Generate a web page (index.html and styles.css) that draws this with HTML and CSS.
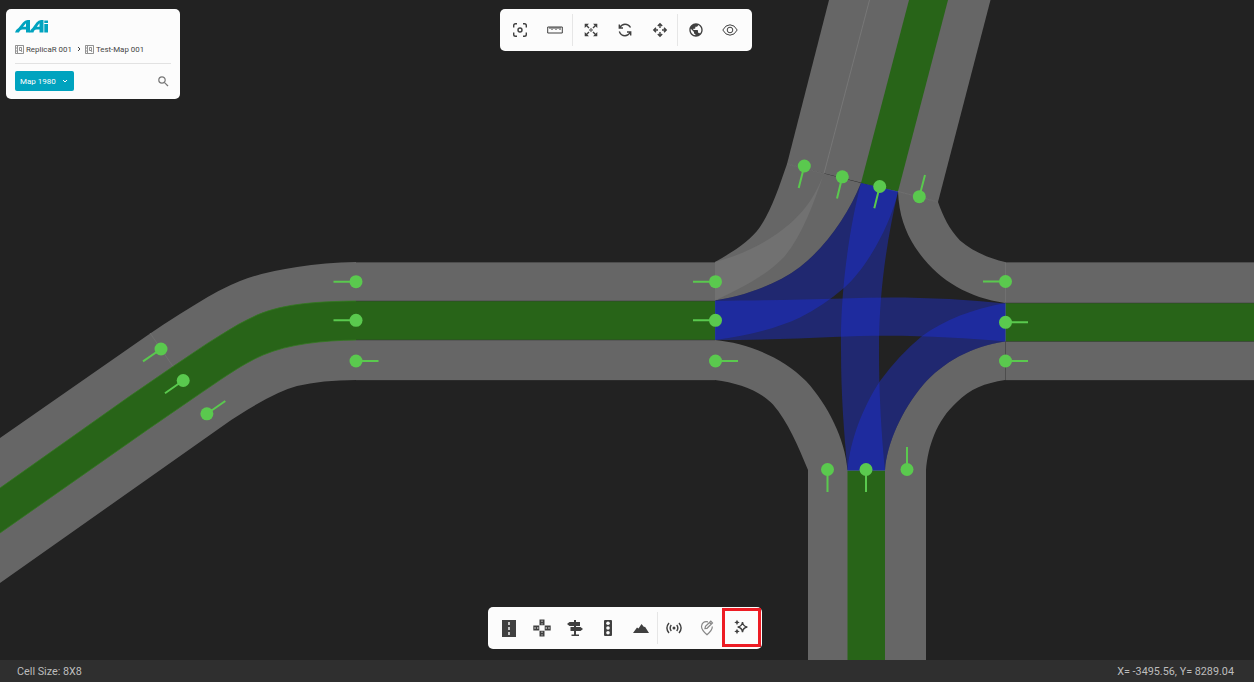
FILE: index.html
```html
<!DOCTYPE html>
<html lang="en">
<head>
  <meta charset="UTF-8" />
  <meta name="viewport" content="width=device-width, initial-scale=1.0" />
  <title>Map Editor</title>
  <link rel="stylesheet" href="styles.css">
</head>
<body>
  <div class="editor">
    <main class="map-area">
      <svg class="map" width="1254" height="660" viewBox="0 0 1254 660">
        <!-- lanes -->
        <g class="lane">
          <path d="M0 438L130 347.500C152 332 174 317 197 303.500Q220 289 240 281Q263 272 297 267Q325 262.500 356 262H715V380H356Q322 380 297 386Q278 391 247 410Q232 419 217 430L0 583Z" />
          <path d="M829 0H990.500L938 202L787 164Z" />
          <path d="M1005 262H1254V380H1005Z" />
          <path d="M808 470H926V660H808Z" />
          <path d="M787 164C779 187 772 209 760 227C750 241 736 250 715 262V300.500C738 297 774 287 800 267C827 246 849 213 861 183Z" />
          <path d="M898 191.500C899 215 905 231 915 247C936 279 966 297 1005 303V262C988 258 972 251 960 240.500C949 229 943 216 938 202Z" />
          <path d="M715 340C746 343 781 356 806 381C828 405 845 439 847.500 470H808C798 446 788 422 773 404.500C759 390 738 383 715 380Z" />
          <path d="M1005 341.500C972 346 943 362 923 385C902 410 887 443 885 470H926C928 447 936 421 957 402C970 389 985 383 1005 380Z" />
        </g>
        <path class="lane-overlap" d="M824 173.500C813 202 799 218 778 233C760 246 738 256 715 262V300.500C740 289 767 275 784 257C802 236 813 205 824 173.500Z" />
        <g class="lane-active">
          <path d="M0 488L130 396L173 366.500C189 356 204 345 220 335.500Q239 323 257 315C285 303 320 301.500 356 301H715.500V340H356C322 340.500 289 344 263 355C240 365 219 381 195 397L147 430L0 533Z" />
          <path d="M909 0H948L898 191.500L861 183Z" />
          <path d="M1005.500 303H1254V341.500H1005.500Z" />
          <path d="M847.500 470.500H885V660H847.500Z" />
        </g>

        <!-- connections inside the junction -->
        <g class="connection">
          <path d="M861 183C849 213 827 246 800 267C774 287 738 297 715 300.500V340C752 335 780 327 800 317.500Q823 306 844 288C867 268 891 224 898 191.500Z" />
          <path d="M861 183C850 225 840 290 841 350C841 395 844 432 847.500 470.500H885C882 439 879 400 879 350C879 290 887 240 898 191.500Z" />
          <path d="M715 301C760 300 800 300 843 298.500C898 296 955 298 1005.500 303.500V341.500C955 337 898 334 833 337C795 339 755 340 715 340Z" />
          <path d="M1005.500 303C972 309 944 320 921.500 336.500Q899 355 880 381C863 407 850 440 847.500 470.500H885C887 443 902 410 923 385C943 362 972 346 1005.500 341.500Z" />
        </g>

        <!-- borders -->
        <path class="lane-line" d="M869.500 0L824 173.500" />
        <g class="edge-light">
          <path d="M787 164L824 173.500M898 191.500L938 202M150 333L173 366.500M1005.500 262V302" />
          <path class="green-line" d="M0 488L130 396L173 366.500C189 356 204 345 220 335.500Q239 323 257 315C285 303 320 301.500 356 301M356 340C322 340.500 289 344 263 355C240 365 219 381 195 397L147 430L0 533" />
        </g>
        <g class="edge-dark">
          <path d="M356 262.500H715M356 301H715M356 340H715M356 380.500H715M1005.500 262.500H1254M1005.500 303H1254M1005.500 341.500H1254M1005.500 380.500H1254M1005.500 341.500V380" />
        </g>

        <!-- nodes -->
        <g class="node">
          <path d="M356 281.700H333.500M356 320.300H333.500M356 361H378.500M715.500 281.700H693M715.500 320.300H693M715.500 361H738M1005.500 281.500H983M1005.500 322.300H1028M1005.500 361H1028M827.500 469.500V492M866 469.500V492M907 469.500V447M161 349L143 361.300M183.200 380.500L165 393.300M206.900 413.800L225.300 401M804.300 166L798.700 188M842.300 176.800L837 198.500M879.700 186.500L874.300 208.300M919.300 196.700L925 175" />
          <circle cx="356" cy="281.700" r="6.500" />
          <circle cx="356" cy="320.300" r="6.500" />
          <circle cx="356" cy="361" r="6.500" />
          <circle cx="715.500" cy="281.700" r="6.500" />
          <circle cx="715.500" cy="320.300" r="6.500" />
          <circle cx="715.500" cy="361" r="6.500" />
          <circle cx="1005.500" cy="281.500" r="6.500" />
          <circle cx="1005.500" cy="322.300" r="6.500" />
          <circle cx="1005.500" cy="361" r="6.500" />
          <circle cx="827.500" cy="469.500" r="6.500" />
          <circle cx="866" cy="469.500" r="6.500" />
          <circle cx="907" cy="469.500" r="6.500" />
          <circle cx="161" cy="349" r="6.500" />
          <circle cx="183.200" cy="380.500" r="6.500" />
          <circle cx="206.900" cy="413.800" r="6.500" />
          <circle cx="804.300" cy="166" r="6.500" />
          <circle cx="842.300" cy="176.800" r="6.500" />
          <circle cx="879.700" cy="186.500" r="6.500" />
          <circle cx="919.300" cy="196.700" r="6.500" />
        </g>
      </svg>

      <section class="panel">
        <svg class="logo" width="34" height="13" viewBox="0 0 34 13">
          <path fill-rule="evenodd" d="M0 12.500Q.5 9.500 3.500 8L8 2.500Q10 0 12.500 0H15V12.500H11V9.500H7.500Q5 9.500 4 12.500ZM8 6.800H11V3.200Z" />
          <path fill-rule="evenodd" d="M14.500 12.500Q15 9.500 17.500 8L21.500 2.500Q23.500 0 26 0H28.500V12.500H24.500V9.500H21.500Q19 9.500 18.500 12.500ZM21.800 6.800H24.500V3.200Z" />
          <path d="M29.300 4H33V12.500H29.300ZM29.300 .5H33V3H29.300Z" />
        </svg>
        <nav class="breadcrumb">
          <svg class="crumb-icon" width="9" height="9" viewBox="0 0 9 9"><path d="M.5 .5H8.500V8.500H.5ZM2.500 1V8M4.500 2.500H6.500V5.500H4.500ZM6 5.500L7 7M1 3H2M1 6H2" /></svg>
          <span class="crumb-first">ReplicaR 001</span>
          <svg class="crumb-arrow" width="4" height="6" viewBox="0 0 4 6"><path d="M1 1L3 3L1 5" /></svg>
          <svg class="crumb-icon" width="9" height="9" viewBox="0 0 9 9"><path d="M.5 .5H8.500V8.500H.5ZM2.500 1V8M4.500 2.500H6.500V5.500H4.500ZM6 5.500L7 7M1 3H2M1 6H2" /></svg>
          <span>Test-Map 001</span>
        </nav>
        <div class="panel-row">
          <button class="map-button">Map 1980
            <svg width="6" height="4" viewBox="0 0 6 4"><path d="M1 1L3 3L5 1" /></svg>
          </button>
          <svg class="search" width="11" height="11" viewBox="0 0 11 11"><circle cx="4" cy="4" r="3.200" /><path d="M6.300 6.300L10 10" /></svg>
        </div>
      </section>

      <div class="toolbar toolbar-top">
        <button class="tool"><svg class="line" width="16" height="16" viewBox="0 0 16 16"><path d="M1.700 5.500V3.500Q1.700 1.700 3.500 1.700H5M11 1.700H12.500Q14.300 1.700 14.300 3.500V5.500M14.300 10.500V12.500Q14.300 14.300 12.500 14.300H11M5 14.300H3.500Q1.700 14.300 1.700 12.500V10.500" /><circle cx="8" cy="8" r="2" /></svg></button>
        <button class="tool"><svg class="line thin" width="16" height="16" viewBox="0 0 16 16"><path d="M.7 5H15.300V11H.7ZM3 5V7M5 5V8M7 5V7M9 5V8M11 5V7M13 5V8" /></svg></button>
        <span class="divider"></span>
        <button class="tool"><svg class="line" width="16" height="16" viewBox="0 0 16 16"><path d="M2.500 2.500L6 6M13.500 2.500L10 6M2.500 13.500L6 10M13.500 13.500L10 10" /><circle class="thin" cx="8" cy="8" r="1.200" /><path class="solid" d="M1.700 1.700H6L1.700 6ZM14.300 1.700V6L10 1.700ZM1.700 14.300V10L6 14.300ZM14.300 14.300H10L14.300 10Z" /></svg></button>
        <button class="tool"><svg class="line" width="16" height="16" viewBox="0 0 16 16"><path d="M2.300 2.500V6H6M2.800 5.500Q4.800 2.200 8 2.200Q11.700 2.200 13.500 5.500M2.300 9.500Q4 13.800 8 13.800Q11.200 13.800 13.200 10.500M10 10H13.700V13.500" /></svg></button>
        <button class="tool"><svg class="line" width="16" height="16" viewBox="0 0 16 16"><path d="M8 2V6M8 10V14M2 8H6M10 8H14M5.800 4L8 1.800L10.200 4M5.800 12L8 14.200L10.200 12M4 5.800L1.800 8L4 10.200M12 5.800L14.200 8L12 10.200" /></svg></button>
        <span class="divider"></span>
        <button class="tool"><svg width="16" height="16" viewBox="0 0 24 24"><path d="M12 2C6.480 2 2 6.480 2 12s4.480 10 10 10 10-4.480 10-10S17.520 2 12 2zm-1 17.930c-3.950-.49-7-3.850-7-7.930 0-.62.080-1.210.210-1.790L9 15v1c0 1.100.9 2 2 2v1.930zm6.900-2.540c-.26-.81-1-1.390-1.900-1.390h-1v-3c0-.55-.45-1-1-1H8v-2h2c.55 0 1-.45 1-1V7h2c1.100 0 2-.9 2-2v-.41c2.930 1.190 5 4.060 5 7.410 0 2.080-.8 3.970-2.100 5.390z" /></svg></button>
        <button class="tool"><svg class="line thin" width="16" height="16" viewBox="0 0 16 16"><path d="M.8 8Q3.500 2.800 8 2.800T15.200 8Q12.500 13.200 8 13.200T.8 8Z" /><circle cx="8" cy="8" r="2.800" /></svg></button>
      </div>

      <div class="toolbar toolbar-bottom">
        <button class="tool"><svg width="14" height="17" viewBox="0 0 14 17"><path d="M0 0H14V17H0Z" /><path class="white" d="M6.300 2H7.700V5H6.300ZM6.300 7H7.700V10H6.300ZM6.300 12H7.700V15H6.300Z" /></svg></button>
        <button class="tool"><svg width="18" height="18" viewBox="0 0 18 18"><path d="M6.500 .5H11.500V6.300H6.500ZM6.500 11.700H11.500V17.500H6.500ZM.3 6.500H6.300V11.500H.3ZM11.700 6.500H17.700V11.500H11.700Z" /><path class="white" d="M8.600 1.500H9.400V3H8.600ZM8.600 4.300H9.400V5.500H8.600ZM8.600 12.500H9.400V14H8.600ZM8.600 15.200H9.400V16.500H8.600ZM1.300 8.600H2.800V9.400H1.300ZM4 8.600H5.500V9.400H4ZM12.500 8.600H14V9.400H12.500ZM15.200 8.600H16.700V9.400H15.200Z" /></svg></button>
        <button class="tool"><svg width="16" height="16" viewBox="0 0 16 16"><path d="M7 0H9V2H13V6H9V7H13.500L16 9L13.500 11H9V14.500H12V16H4.500V14.500H7V11H3.500V7H7V6H2.500L0 4L2.500 2H7Z" /></svg></button>
        <button class="tool"><svg width="8" height="16" viewBox="0 0 8 16"><rect width="8" height="16" rx="1" /><g class="white"><circle cx="4" cy="3.200" r="1.800" /><circle cx="4" cy="8" r="1.800" /><circle cx="4" cy="12.800" r="1.800" /></g></svg></button>
        <button class="tool"><svg width="16" height="16" viewBox="0 0 16 16"><path d="M0 13L4 7.500L5.500 8.500L8.500 4L11 7L12 6.800L16 13Z" /></svg></button>
        <span class="divider"></span>
        <button class="tool"><svg class="line" width="16" height="16" viewBox="0 0 16 16"><path d="M3 3Q-1.200 8 3 13M13 3Q17.200 8 13 13M5.300 5Q3 8 5.300 11M10.700 5Q13 8 10.700 11" /><circle class="solid" cx="8" cy="8" r="1.500" /></svg></button>
        <button class="tool"><svg class="line muted" width="16" height="16" viewBox="0 0 16 16"><path d="M9 1.900Q3 .8 2.500 6.500Q2.500 10 8 14.800Q13.500 10 13.300 6.500M6 8.500L6.500 6.300L11.800 1.200L13.500 3L8 8.300ZM10.500 2.500L12 4" /></svg></button>
        <button class="tool selected"><svg class="line" width="16" height="16" viewBox="0 0 16 16"><path d="M9.500 3Q10 7.300 14.300 8Q10 8.700 9.500 13.200Q9 8.700 4.700 8Q9 7.300 9.500 3Z" /><path class="solid" d="M4 .8Q4.400 3.100 6.700 3.500Q4.400 3.900 4 6.200Q3.600 3.900 1.300 3.500Q3.600 3.100 4 .8ZM4 9.800Q4.400 12.100 6.700 12.500Q4.400 12.900 4 15.200Q3.600 12.900 1.300 12.500Q3.600 12.100 4 9.800Z" /></svg></button>
      </div>
    </main>

    <footer class="status-bar">
      <span>Cell Size: 8X8</span>
      <span>X= -3495.56, Y= 8289.04</span>
    </footer>
  </div>
</body>
</html>
```
FILE: styles.css
```css
* {
  box-sizing: border-box;
}
body {
  margin: 0;
  background: #222;
  font-family: Roboto, Arial, sans-serif;
  color: #444;
}
button {
  font-family: inherit;
  border: none;
  padding: 0;
  background: none;
  cursor: pointer;
}
svg {
  display: block;
  flex: none;
}
.editor {
  display: flex;
  flex-direction: column;
  height: 682px;
  overflow: hidden;
}
.map-area {
  position: relative;
  height: 660px;
  overflow: hidden;
}

/* map */
.lane {
  fill: #666;
}
.lane-overlap {
  fill: #717171;
}
.lane-active {
  fill: #286418;
}
.connection {
  fill: rgb(30, 48, 224);
  fill-opacity: 0.41;
}
.lane-line {
  stroke: #777;
}
.edge-light {
  fill: none;
  stroke: #727272;
  stroke-width: 0.8;
}
.green-line {
  stroke: #32781f;
}
.edge-dark {
  fill: none;
  stroke: #333;
  stroke-opacity: 0.5;
}
.node {
  fill: #5ac94e;
}
.node path {
  stroke: #5ac94e;
  stroke-width: 2;
}

/* top left panel */
.panel {
  position: absolute;
  left: 6px;
  top: 9px;
  width: 174px;
  height: 90px;
  padding: 11px 9px 0;
  background: #fcfcfc;
  border-radius: 5px;
}
.logo {
  fill: #00a3bf;
}
.breadcrumb {
  display: flex;
  align-items: center;
  height: 10px;
  margin-top: 11px;
  font-size: 7.9px;
  white-space: nowrap;
}
.crumb-icon {
  margin-right: 2px;
  fill: none;
  stroke: #666;
  stroke-width: 0.7;
}
.crumb-arrow {
  margin: 0 4px 0 5px;
  fill: none;
  stroke: #444;
}
.panel-row {
  display: flex;
  align-items: center;
  justify-content: space-between;
  margin-top: 9px;
  padding: 7px 2px 0 0;
  border-top: 1px solid #e2e2e2;
}
.map-button {
  display: flex;
  align-items: center;
  gap: 6px;
  width: 59px;
  height: 20px;
  padding-left: 5px;
  border-radius: 2px;
  background: #00a3bf;
  color: #fff;
  font-size: 8px;
  white-space: nowrap;
}
.map-button svg {
  fill: none;
  stroke: #fff;
}
.search {
  fill: none;
  stroke: #777;
  stroke-width: 1.2;
}

/* toolbars */
.toolbar {
  position: absolute;
  display: flex;
  align-items: center;
  background: #fcfcfc;
  border-radius: 5px;
}
.toolbar-top {
  left: 499.5px;
  top: 9px;
  width: 252px;
  height: 41.5px;
  padding-left: 3.5px;
}
.toolbar-bottom {
  left: 488px;
  top: 607px;
  width: 274px;
  height: 42px;
  padding-left: 5px;
}
.tool {
  display: flex;
  align-items: center;
  justify-content: center;
  flex: none;
  width: 34.7px;
  height: 39px;
  fill: #404040;
}
.toolbar-bottom .tool {
  width: 32.8px;
}
.divider {
  width: 1px;
  height: 32px;
  background: #e6e6e6;
}
.line {
  fill: none;
  stroke: #404040;
  stroke-width: 1.4;
}
.thin {
  stroke-width: 1;
}
.solid {
  fill: #404040;
  stroke: none;
}
.white {
  fill: #fcfcfc;
}
.muted {
  stroke: #888;
  stroke-width: 1.2;
}
.toolbar-bottom .selected {
  width: 39px;
  margin: 0 0 2px -2px;
  border: 3px solid #ed1c24;
}

/* footer */
.status-bar {
  display: flex;
  align-items: center;
  justify-content: space-between;
  height: 22px;
  padding: 0 20px 0 17px;
  background: #2f2f2f;
  color: #bdbdbd;
  font-size: 10.8px;
}
```
